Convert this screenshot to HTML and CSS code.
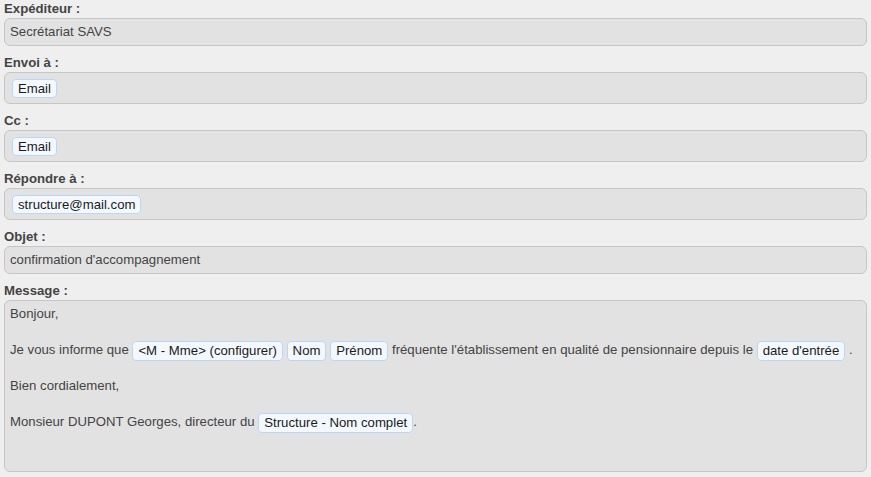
FILE: index.html
```html
<!DOCTYPE html>
<html lang="fr">

<head>
  <meta charset="UTF-8">
  <meta name="viewport" content="width=device-width, initial-scale=1.0">
  <title>Envoi de mail</title>
  <link rel="stylesheet" href="styles.css">
</head>

<body>

  <div class="mail-form">

    <!-- Expediteur -->
    <div class="field">
      <div class="label">Expéditeur :</div>
      <div class="box">Secrétariat SAVS</div>
    </div>

    <!-- Destinataires -->
    <div class="field">
      <div class="label">Envoi à :</div>
      <div class="box box-tags"><span class="tag">Email</span></div>
    </div>

    <div class="field">
      <div class="label">Cc :</div>
      <div class="box box-tags"><span class="tag">Email</span></div>
    </div>

    <div class="field">
      <div class="label">Répondre à :</div>
      <div class="box box-tags"><span class="tag">structure@mail.com</span></div>
    </div>

    <!-- Objet -->
    <div class="field">
      <div class="label">Objet :</div>
      <div class="box">confirmation d'accompagnement</div>
    </div>

    <!-- Message -->
    <div class="field">
      <div class="label">Message :</div>
      <div class="box box-message">
        <div class="line">Bonjour,</div>
        <div class="line"></div>
        <div class="line">Je vous informe que <span class="tag">&lt;M - Mme&gt; (configurer)</span> <span class="tag">Nom</span> <span class="tag">Prénom</span> fréquente l'établissement en qualité de pensionnaire depuis le <span class="tag">date d'entrée</span> .</div>
        <div class="line"></div>
        <div class="line">Bien cordialement,</div>
        <div class="line"></div>
        <div class="line">Monsieur DUPONT Georges, directeur du <span class="tag">Structure - Nom complet</span>.</div>
      </div>
    </div>

  </div>

</body>

</html>
```

FILE: styles.css
```css
/* General Page Styles */
body {
  margin: 0;
  background: #efefef;
  font-family: 'Liberation Sans', Arial, sans-serif;
  font-size: 13.2px;
  color: #444;
}

.mail-form {
  padding: 0 4px;
}

/* Field */
.field + .field {
  margin-top: 8px;
}

.label {
  font-weight: bold;
  line-height: 18px;
  color: #444;
}

.box {
  background: #e2e2e2;
  border: 1px solid #c6c6c6;
  border-radius: 6px;
  padding: 4px 5px;
  line-height: 18px;
  box-sizing: border-box;
}

.box-tags {
  padding: 6px 7px 5px;
  height: 32px;
}

.box-message {
  height: 172px;
}

.line {
  height: 18px;
  white-space: nowrap;
}

/* Tags / Variables */
.tag {
  display: inline-block;
  background: #f3f8ff;
  border: 1px solid #bcd6f5;
  border-radius: 4px;
  padding: 0 5px;
  line-height: 18px;
  color: #1a1a1a;
  vertical-align: middle;
  margin: -1px 0;
}

.box-tags .tag {
  margin: 0;
  line-height: 17px;
  vertical-align: top;
}
```
